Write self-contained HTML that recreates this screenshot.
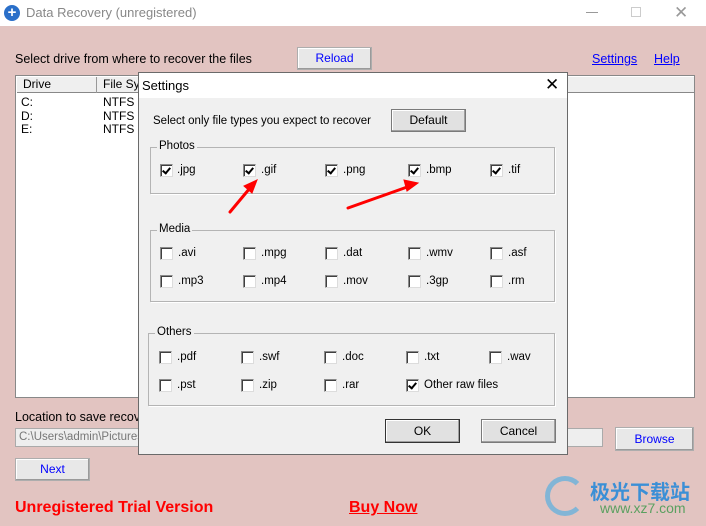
<!DOCTYPE html>
<html><head><meta charset="utf-8"><style>
*{margin:0;padding:0;box-sizing:border-box}
body{width:706px;height:526px;position:relative;overflow:hidden;background:#e2c4c1;font-family:"Liberation Sans",Arial,sans-serif;font-size:12px;color:#000}
.a{position:absolute;white-space:nowrap}
.btn{position:absolute;background:#e8e8e8;border:1px solid #adadad;box-shadow:inset -1px -1px 0 #9a9a9a,inset 1px 1px 0 #fff;text-align:center;color:#0000ff;font-size:12px}
.dbtn{position:absolute;background:#e1e1e1;border:1px solid #7a7a7a;box-shadow:inset -1px -1px 0 #a0a0a0,inset 1px 1px 0 #fff;text-align:center;font-size:12px}
.g{position:absolute;border:1px solid #b4b4b4;box-shadow:1px 1px 0 #fff}
.gl{position:absolute;top:-8px;left:6px;background:#f0f0f0;padding:0 2px;font-size:11.5px}
.cb{position:absolute;width:13px;height:13px;background:#fff;border:1px solid #8a8a8a;border-right-color:#dcdcdc;border-bottom-color:#dcdcdc;box-shadow:inset 1px 1px 0 #404040}
.cb.c::after{content:"";position:absolute;left:3px;top:1px;width:3px;height:6px;border:solid #000;border-width:0 2px 2px 0;transform:rotate(40deg)}
.lb{position:absolute;font-size:11.5px}
</style></head><body>
<div class="a" style="left:0;top:0;width:706px;height:26px;background:#fff"></div>
<div class="a" style="left:4px;top:5px;width:16px;height:16px;border-radius:50%;background:#2a6fc9;color:#fff;font-weight:bold;font-size:15px;line-height:16px;text-align:center">+</div>
<div class="a" style="left:26px;top:5px;font-size:13px;color:#888">Data Recovery (unregistered)</div>
<div class="a" style="left:586px;top:12px;width:12px;height:1px;background:#999"></div>
<div class="a" style="left:631px;top:7px;width:10px;height:10px;border:1px solid #ccc"></div>
<div class="a" style="left:674px;top:3px;font-size:17px;color:#999">✕</div>

<div class="a" style="left:15px;top:52px;font-size:12.5px">Select drive from where to recover the files</div>
<div class="btn" style="left:297px;top:47px;width:75px;height:23px;line-height:21px">Reload</div>
<div class="a" style="left:592px;top:52px;color:#0000ff;text-decoration:underline;font-size:12.5px">Settings</div>
<div class="a" style="left:654px;top:52px;color:#0000ff;text-decoration:underline;font-size:12.5px">Help</div>

<div class="a" style="left:15px;top:75px;width:680px;height:323px;background:#fff;border:1px solid #888"></div>
<div class="a" style="left:17px;top:77px;width:677px;height:16px;background:#efefef;border-bottom:1px solid #888"></div>
<div class="a" style="left:17px;top:77px;width:80px;height:16px;border-right:1px solid #999;padding-left:6px;font-size:12px">Drive</div>
<div class="a" style="left:103px;top:77px;font-size:12px">File Sys</div>
<div class="a" style="left:21px;top:96px;line-height:13.5px">C:<br>D:<br>E:</div>
<div class="a" style="left:103px;top:96px;line-height:13.5px">NTFS<br>NTFS<br>NTFS</div>

<div class="a" style="left:15px;top:410px;font-size:12.5px">Location to save recove</div>
<div class="a" style="left:15px;top:428px;width:588px;height:19px;background:#eeeeee;border:1px solid #aaa;color:#777;padding:2px 3px;font-size:11.5px">C:\Users\admin\Pictures</div>
<div class="btn" style="left:615px;top:427px;width:79px;height:24px;line-height:22px">Browse</div>
<div class="btn" style="left:15px;top:458px;width:75px;height:23px;line-height:21px">Next</div>
<div class="a" style="left:15px;top:499px;color:#f00;font-weight:bold;font-size:16px">Unregistered Trial Version</div>
<div class="a" style="left:349px;top:499px;color:#f00;font-weight:bold;font-size:16px;text-decoration:underline">Buy Now</div>
<div class="a" style="left:590px;top:476px;font-size:20px;font-weight:bold;color:#3b8fd6;font-family:'Noto Sans CJK SC',sans-serif">极光下载站</div>
<div class="a" style="left:600px;top:500px;font-size:14px;color:#5aa060">www.xz7.com</div>
<div class="a" style="left:545px;top:476px;width:40px;height:40px;border-radius:50%;border:5px solid #5ab0e0;border-right-color:transparent;opacity:.7"></div>

<!-- dialog -->
<div class="a" style="left:138px;top:72px;width:430px;height:383px;background:#f0f0f0;border:1px solid #6a6a6a"></div>
<div class="a" style="left:139px;top:73px;width:428px;height:25px;background:#fff"></div>
<div class="a" style="left:142px;top:78px;font-size:13px">Settings</div>
<div class="a" style="left:545px;top:75px;font-size:17px">✕</div>
<div class="a" style="left:153px;top:115px;font-size:11.5px">Select only file types you expect to recover</div>
<div class="dbtn" style="left:391px;top:109px;width:75px;height:23px;line-height:21px">Default</div>

<div class="g" style="left:150px;top:147px;width:405px;height:47px;"><span class="gl">Photos</span></div>
<div class="g" style="left:150px;top:230px;width:405px;height:72px;"><span class="gl">Media</span></div>
<div class="g" style="left:148px;top:333px;width:407px;height:73px;"><span class="gl">Others</span></div>

<div class="cb c" style="left:160px;top:164px"></div><div class="lb" style="left:177px;top:164px">.jpg</div>
<div class="cb c" style="left:243px;top:164px"></div><div class="lb" style="left:261px;top:164px">.gif</div>
<div class="cb c" style="left:325px;top:164px"></div><div class="lb" style="left:343px;top:164px">.png</div>
<div class="cb c" style="left:408px;top:164px"></div><div class="lb" style="left:426px;top:164px">.bmp</div>
<div class="cb c" style="left:490px;top:164px"></div><div class="lb" style="left:508px;top:164px">.tif</div>

<div class="cb" style="left:160px;top:247px"></div><div class="lb" style="left:178px;top:247px">.avi</div>
<div class="cb" style="left:243px;top:247px"></div><div class="lb" style="left:261px;top:247px">.mpg</div>
<div class="cb" style="left:325px;top:247px"></div><div class="lb" style="left:343px;top:247px">.dat</div>
<div class="cb" style="left:408px;top:247px"></div><div class="lb" style="left:426px;top:247px">.wmv</div>
<div class="cb" style="left:490px;top:247px"></div><div class="lb" style="left:508px;top:247px">.asf</div>
<div class="cb" style="left:160px;top:275px"></div><div class="lb" style="left:178px;top:275px">.mp3</div>
<div class="cb" style="left:243px;top:275px"></div><div class="lb" style="left:261px;top:275px">.mp4</div>
<div class="cb" style="left:325px;top:275px"></div><div class="lb" style="left:343px;top:275px">.mov</div>
<div class="cb" style="left:408px;top:275px"></div><div class="lb" style="left:426px;top:275px">.3gp</div>
<div class="cb" style="left:490px;top:275px"></div><div class="lb" style="left:508px;top:275px">.rm</div>

<div class="cb" style="left:159px;top:351px"></div><div class="lb" style="left:177px;top:351px">.pdf</div>
<div class="cb" style="left:241px;top:351px"></div><div class="lb" style="left:259px;top:351px">.swf</div>
<div class="cb" style="left:324px;top:351px"></div><div class="lb" style="left:342px;top:351px">.doc</div>
<div class="cb" style="left:406px;top:351px"></div><div class="lb" style="left:424px;top:351px">.txt</div>
<div class="cb" style="left:489px;top:351px"></div><div class="lb" style="left:507px;top:351px">.wav</div>
<div class="cb" style="left:159px;top:379px"></div><div class="lb" style="left:177px;top:379px">.pst</div>
<div class="cb" style="left:241px;top:379px"></div><div class="lb" style="left:259px;top:379px">.zip</div>
<div class="cb" style="left:324px;top:379px"></div><div class="lb" style="left:342px;top:379px">.rar</div>
<div class="cb c" style="left:406px;top:379px"></div><div class="lb" style="left:424px;top:379px">Other raw files</div>

<div class="dbtn" style="left:385px;top:419px;width:75px;height:24px;line-height:22px;border-color:#333">OK</div>
<div class="dbtn" style="left:481px;top:419px;width:75px;height:24px;line-height:22px">Cancel</div>

<svg class="a" style="left:0;top:0" width="706" height="526">
<g stroke="#f00" stroke-width="3" fill="#f00" stroke-linecap="round">
<line x1="230" y1="212" x2="250" y2="188"/>
<polygon points="257,180 244,186 252,193" stroke-width="1"/>
<line x1="348" y1="208" x2="410" y2="186"/>
<polygon points="418,183 404,180 407,191" stroke-width="1"/>
</g></svg>
</body></html>
